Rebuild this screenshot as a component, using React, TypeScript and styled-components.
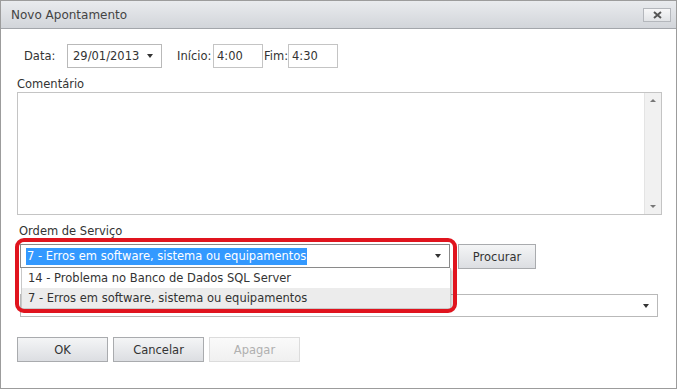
import styled, { createGlobalStyle } from "styled-components";

const Global = createGlobalStyle`
  html, body {
    margin: 0;
    padding: 0;
    background: #fff;
  }
  body {
    font-family: "DejaVu Sans", Verdana, sans-serif;
    font-size: 11.5px;
    color: #333;
  }
`;

export default function App() {
  return (
    <>
      <Global />
      <Window>
        <TitleBar>
          <Title>Novo Apontamento</Title>
          <CloseButton>
            <svg width="9" height="8" viewBox="0 0 9 8">
              <path d="M1 1 L8 7 M8 1 L1 7" stroke="#555" strokeWidth="2" />
            </svg>
          </CloseButton>
        </TitleBar>

        <Body>
          <TimeRow>
            <Label $width={43}>Data:</Label>
            <Select $width={95}>
              <span>29/01/2013</span>
              <Arrow />
            </Select>
            <Label $width={36} $left={15}>Início:</Label>
            <TextInput $width={50}>4:00</TextInput>
            <Label $width={24} $left={1}>Fim:</Label>
            <TextInput $width={50}>4:30</TextInput>
          </TimeRow>

          <FieldLabel>Comentário</FieldLabel>
          <TextArea>
            <ScrollBar>
              <ScrollArrow $up />
              <ScrollArrow />
            </ScrollBar>
          </TextArea>

          <FieldLabel $left={2} $top={8}>Ordem de Serviço</FieldLabel>
          <SearchRow>
            <SelectWrap>
              <Select $width={430} $focused>
                <Selected>7 - Erros em software, sistema ou equipamentos</Selected>
                <Arrow />
              </Select>
              <DropList>
                <DropItem>14 - Problema no Banco de Dados SQL Server</DropItem>
                <DropItem $hover>7 - Erros em software, sistema ou equipamentos</DropItem>
              </DropList>
              <Highlight />
            </SelectWrap>
            <Button $width={78}>Procurar</Button>
          </SearchRow>

          <WideRow>
            <Select $width={638} $height={23}>
              <span />
              <Arrow />
            </Select>
          </WideRow>

          <ButtonRow>
            <Button $width={91}>OK</Button>
            <Button $width={91}>Cancelar</Button>
            <Button $width={91} disabled>
              Apagar
            </Button>
          </ButtonRow>
        </Body>
      </Window>
    </>
  );
}

const Window = styled.div`
  width: 677px;
  height: 389px;
  box-sizing: border-box;
  border: 1px solid #9c9c9c;
  background: #fff;
  display: flex;
  flex-direction: column;
`;

const TitleBar = styled.div`
  height: 27px;
  border-bottom: 1px solid #a3a6ab;
  background: linear-gradient(#e9ebee, #d2d5da);
  display: flex;
  align-items: center;
  justify-content: space-between;
  padding: 0 5px 0 10px;
`;

const Title = styled.div`
  color: #444;
  font-size: 12px;
`;

const CloseButton = styled.div`
  box-sizing: border-box;
  width: 28px;
  height: 14px;
  border: 1px solid #b4b7bc;
  background: linear-gradient(#f7f7f8, #e2e4e7);
  display: flex;
  align-items: center;
  justify-content: center;
  margin-top: 1px;
`;

const Body = styled.div`
  padding: 15px 16px 0 16px;
  display: flex;
  flex-direction: column;
`;

const TimeRow = styled.div`
  display: flex;
  align-items: center;
  height: 24px;
  padding-left: 7px;
`;

const Label = styled.span<{ $width: number; $left?: number }>`
  width: ${(p) => p.$width}px;
  margin-left: ${(p) => p.$left ?? 0}px;
  white-space: nowrap;
`;

const Select = styled.div<{ $width: number; $height?: number; $focused?: boolean }>`
  position: relative;
  box-sizing: border-box;
  width: ${(p) => p.$width}px;
  height: ${(p) => p.$height ?? 24}px;
  border: 1px solid ${(p) => (p.$focused ? "#8a8a8a" : "#b9b9b9")};
  background: #fff;
  display: flex;
  align-items: center;
  justify-content: space-between;
  padding: 0 8px 0 5px;
  white-space: nowrap;
  overflow: hidden;
`;

const Arrow = styled.span`
  width: 0;
  height: 0;
  border-left: 3.5px solid transparent;
  border-right: 3.5px solid transparent;
  border-top: 4px solid #333;
`;

const TextInput = styled.div<{ $width: number }>`
  box-sizing: border-box;
  width: ${(p) => p.$width}px;
  height: 24px;
  border: 1px solid #c4c4c4;
  display: flex;
  align-items: center;
  padding-left: 3px;
`;

const FieldLabel = styled.div<{ $left?: number; $top?: number }>`
  margin-top: ${(p) => p.$top ?? 8}px;
  margin-left: ${(p) => p.$left ?? 0}px;
  height: 16px;
  line-height: 16px;
`;

const TextArea = styled.div`
  box-sizing: border-box;
  width: 645px;
  height: 123px;
  border: 1px solid #c4c4c4;
  display: flex;
  justify-content: flex-end;
`;

const ScrollBar = styled.div`
  width: 16px;
  background: #f1f1f1;
  border-left: 1px solid #e4e4e4;
  display: flex;
  flex-direction: column;
  justify-content: space-between;
  align-items: center;
  padding: 6px 0;
`;

const ScrollArrow = styled.span<{ $up?: boolean }>`
  width: 0;
  height: 0;
  border-left: 3px solid transparent;
  border-right: 3px solid transparent;
  ${(p) =>
    p.$up ? "border-bottom: 3px solid #777;" : "border-top: 3px solid #777;"}
`;

const SearchRow = styled.div`
  display: flex;
  align-items: flex-start;
  gap: 8px;
  margin-top: 5px;
  padding-left: 3px;
`;

const SelectWrap = styled.div`
  position: relative;
  z-index: 2;
`;

const Selected = styled.span`
  background: #3399ff;
  color: #fff;
  padding: 1px 1px 2px;
`;

const DropList = styled.div`
  position: absolute;
  left: 1px;
  top: 24px;
  width: 428px;
  background: #fff;
  border: 1px solid #c8c8c8;
  border-top: none;
  box-shadow: 2px 2px 2px rgba(0, 0, 0, 0.18);
`;

const DropItem = styled.div<{ $hover?: boolean }>`
  height: 20px;
  line-height: 20px;
  padding-left: 6px;
  background: ${(p) => (p.$hover ? "#ececec" : "#fff")};
  white-space: nowrap;
`;

const Highlight = styled.div`
  position: absolute;
  left: -5px;
  top: -6px;
  width: 442px;
  height: 75px;
  box-sizing: border-box;
  border: 4px solid #e0141e;
  border-radius: 9px;
  pointer-events: none;
`;

const Button = styled.button<{ $width: number }>`
  box-sizing: border-box;
  width: ${(p) => p.$width}px;
  height: 25px;
  border: 1px solid #a9abae;
  background: linear-gradient(#f4f5f6, #dcdee2);
  font-family: inherit;
  font-size: 11.5px;
  color: #333;
  padding: 0;

  &:disabled {
    border-color: #dcdcdc;
    background: linear-gradient(#fafafa, #f0f0f0);
    color: #b0b0b0;
  }
`;

const WideRow = styled.div`
  margin-top: 25px;
  padding-left: 3px;
`;

const ButtonRow = styled.div`
  display: flex;
  gap: 5px;
  margin-top: 20px;
`;
